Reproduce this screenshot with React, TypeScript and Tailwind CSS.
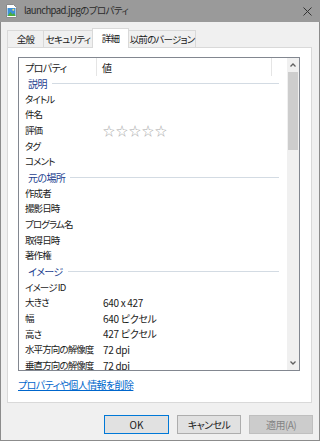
import React from "react";

const font = "font-['Noto_Sans_CJK_JP','Noto_Sans',sans-serif] [font-feature-settings:'palt']";

type Row =
  | { kind: "group"; label: string }
  | { kind: "item"; label: string; value?: string; stars?: boolean };

const rows: Row[] = [
  { kind: "group", label: "説明" },
  { kind: "item", label: "タイトル" },
  { kind: "item", label: "件名" },
  { kind: "item", label: "評価", stars: true },
  { kind: "item", label: "タグ" },
  { kind: "item", label: "コメント" },
  { kind: "group", label: "元の場所" },
  { kind: "item", label: "作成者" },
  { kind: "item", label: "撮影日時" },
  { kind: "item", label: "プログラム名" },
  { kind: "item", label: "取得日時" },
  { kind: "item", label: "著作権" },
  { kind: "group", label: "イメージ" },
  { kind: "item", label: "イメージ ID" },
  { kind: "item", label: "大きさ", value: "640 x 427" },
  { kind: "item", label: "幅", value: "640 ピクセル" },
  { kind: "item", label: "高さ", value: "427 ピクセル" },
  { kind: "item", label: "水平方向の解像度", value: "72 dpi" },
  { kind: "item", label: "垂直方向の解像度", value: "72 dpi" },
];

function FileIcon() {
  return (
    <svg width="13" height="14" viewBox="0 0 13 14">
      <path d="M1.5 0.5h7l3 3v10h-10z" fill="#fff" stroke="#8a8a8a" />
      <rect x="2.5" y="4" width="8" height="8" fill="#3d8fd6" />
      <path d="M2.5 12l3-4 2 2.5 1.5-1.5 1.5 3z" fill="#4caf3a" />
      <circle cx="8.3" cy="5.8" r="1" fill="#ffe36b" />
    </svg>
  );
}

function Tab({ label, w, active }: { label: string; w: string; active?: boolean }) {
  const base = `${w} -ml-px first:ml-0 border border-b-0 border-[#d9d9d9] flex items-center justify-center text-[9.5px] tracking-[-0.8px] whitespace-nowrap text-[#1a1a1a] shrink-0`;
  if (active) {
    return <div className={`${base} h-[20px] -mb-px relative z-10 bg-white`}>{label}</div>;
  }
  return <div className={`${base} h-[17px] bg-[#f0f0f0]`}>{label}</div>;
}

function Stars() {
  return (
    <span className="flex gap-[1px] text-[#a9a9a9] text-[12px] leading-none">
      <span>☆</span>
      <span>☆</span>
      <span>☆</span>
      <span>☆</span>
      <span>☆</span>
    </span>
  );
}

function Scrollbar() {
  return (
    <div className="w-[12px] h-full bg-[#f0f0f0] flex flex-col items-center shrink-0">
      <svg width="12" height="14" viewBox="0 0 12 14" className="shrink-0">
        <path d="M3.5 8.5l2.5-2.5 2.5 2.5" fill="none" stroke="#606060" strokeWidth="1.3" />
      </svg>
      <div className="w-[10px] h-[78px] bg-[#cdcdcd]" />
      <div className="flex-1" />
      <svg width="12" height="14" viewBox="0 0 12 14" className="shrink-0">
        <path d="M3.5 5.5l2.5 2.5 2.5-2.5" fill="none" stroke="#606060" strokeWidth="1.3" />
      </svg>
    </div>
  );
}

export default function App() {
  return (
    <div className={`w-[320px] h-[441px] bg-[#f0f0f0] border-x border-b border-[#8c8c8c] flex flex-col ${font}`}>
      {/* Title bar */}
      <div className="h-[22px] -mx-px bg-[#9a9a9a] flex items-center pl-[5px] pr-[8px] shrink-0">
        <FileIcon />
        <span className="ml-[6px] text-[9.5px] tracking-[-0.6px] text-[#2b2b2b] leading-none">launchpad.jpgのプロパティ</span>
        <div className="flex-1" />
        <svg width="9" height="9" viewBox="0 0 9 9">
          <path d="M0.5 0.5l8 8M8.5 0.5l-8 8" stroke="#333" strokeWidth="1" />
        </svg>
      </div>

      {/* Tabs */}
      <div className="pl-[6px] pr-[7px] pt-[8px]">
        <div className="flex items-end h-[17px]">
          <Tab label="全般" w="w-[37px]" />
          <Tab label="セキュリティ" w="w-[50px]" />
          <Tab label="詳細" w="w-[37px]" active />
          <Tab label="以前のバージョン" w="w-[68px]" />
        </div>

        {/* Panel */}
        <div className="h-[356px] bg-white border border-[#d9d9d9] pl-[10px] pt-[9px]">
          <div className="w-[282px] h-[314px] border border-[#828790] flex overflow-hidden">
            <div className="flex-1 flex flex-col min-w-0">
              {/* Header */}
              <div className="h-[18px] flex text-[10px] tracking-[-0.6px] text-[#1a1a1a] shrink-0">
                <div className="w-[78px] pl-[6px] flex items-center border-r border-[#e5e5e5]">プロパティ</div>
                <div className="w-[175px] pl-[5px] flex items-center border-r border-[#e5e5e5]">値</div>
              </div>
              {rows.map((r, i) =>
                r.kind === "group" ? (
                  <div key={i} className="h-[15.67px] shrink-0 flex items-center pl-[9px] pr-[8px]">
                    <span className="text-[10px] tracking-[-0.6px] text-[#1e3f8f] leading-none whitespace-nowrap">{r.label}</span>
                    <div className="flex-1 ml-[5px] h-px bg-[#d3dbe3]" />
                  </div>
                ) : (
                  <div key={i} className="h-[15.67px] shrink-0 flex items-center text-[10px] text-[#1a1a1a] leading-none">
                    <span className="w-[84px] shrink-0 pl-[6px] whitespace-nowrap text-[9.5px] tracking-[-0.9px]">{r.label}</span>
                    {r.stars ? <Stars /> : <span className="whitespace-nowrap tracking-[-0.3px]">{r.value}</span>}
                  </div>
                )
              )}
            </div>
            <Scrollbar />
          </div>
          <div className="mt-[9px] text-[10px] tracking-[-0.6px] text-[#0066cc] underline leading-none">プロパティや個人情報を削除</div>
        </div>
      </div>

      {/* Buttons */}
      <div className="flex justify-end gap-[8px] pr-[6px] mt-[12px]">
        <button className="w-[65px] h-[19px] bg-[#e1e1e1] border border-[#0078d7] text-[10px] text-[#1a1a1a] leading-none">
          OK
        </button>
        <button className="w-[64px] h-[19px] bg-[#e1e1e1] border border-[#adadad] text-[10px] tracking-[-0.6px] text-[#1a1a1a] leading-none">
          キャンセル
        </button>
        <button className="w-[64px] h-[19px] bg-[#cccccc] border border-[#bfbfbf] text-[10px] tracking-[-0.6px] text-[#838383] leading-none">
          適用(A)
        </button>
      </div>
    </div>
  );
}
